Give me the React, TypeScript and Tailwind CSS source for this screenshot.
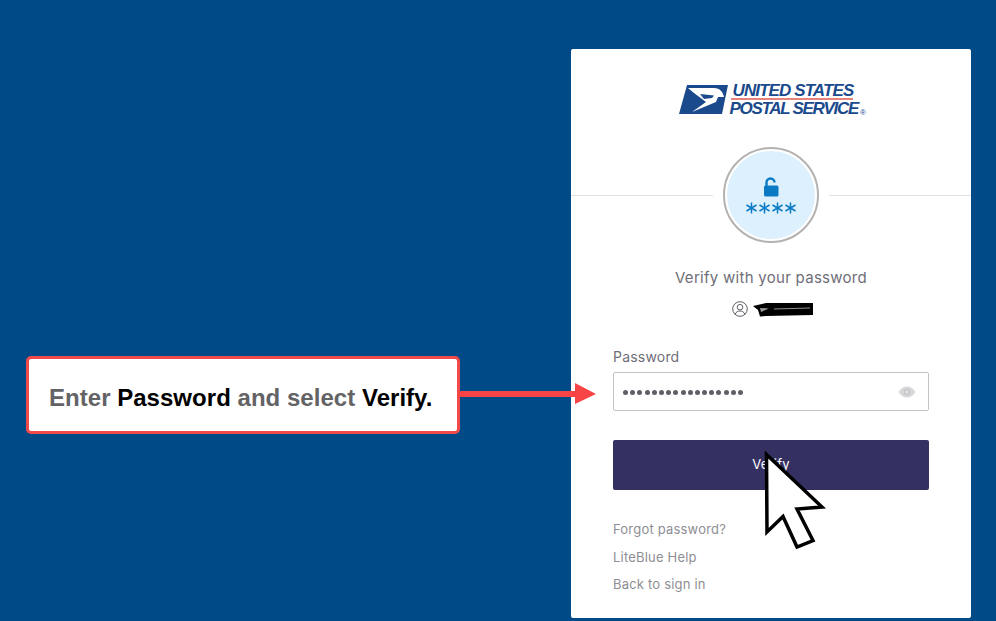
function UspsLogo() {
  return (
    <div className="flex items-start">
      <svg width="50" height="30" viewBox="0 0 50 30" className="mt-[1px] shrink-0">
        <path d="M8 0H49L43 29H0Z" fill="#1b4a8c" />
        <path d="M9 3H35C41 3 44 7 45 12L39 12L37 17L13 27L27 17L15 8Z" fill="#fff" />
        <path d="M21 9L35 10.500L33 13L25 14Z" fill="#1b4a8c" />
      </svg>
      <div className="-ml-[1px] flex w-[136px] flex-col font-['Liberation_Sans',sans-serif] text-[17px] font-bold italic leading-[14px] text-[#1b4a8c]">
        <span className="whitespace-nowrap pl-[5px] tracking-[-0.9px]">UNITED STATES</span>
        <span className="ml-[3px] mr-[11px] mb-[2px] h-[2px] bg-[#e8837c]" />
        <span className="whitespace-nowrap pl-[2px] tracking-[-1.3px]">
          POSTAL SERVICE<span className="ml-[2px] align-[-1px] text-[8px] font-normal not-italic">®</span>
        </span>
      </div>
    </div>
  );
}

function LockBadge() {
  return (
    <div className="flex h-[96px] w-[96px] items-center justify-center rounded-full border-2 border-[#b4b2b0] bg-white">
      <div className="flex h-[88px] w-[88px] flex-col items-center justify-center rounded-full bg-[#dcf0fe]">
        <svg width="16" height="20" viewBox="0 0 16 20">
          <path d="M3.500 9V5.500a4 4 0 0 1 8 0" fill="none" stroke="#0a7ac4" strokeWidth="2.400" />
          <rect x="1" y="8.500" width="14.500" height="11" rx="1.500" fill="#0a7ac4" />
        </svg>
        <svg width="52" height="12" viewBox="0 0 52 12" className="mt-[5px]" stroke="#0a7ac4" strokeWidth="1.500">
          {[6.5, 19.5, 32.5, 45.5].map((x) => (
            <g key={x}>
              <path d={`M${x} 0.500V11.500`} />
              <path d={`M${x - 5} 3L${x + 5} 9`} />
              <path d={`M${x - 5} 9L${x + 5} 3`} />
            </g>
          ))}
        </svg>
      </div>
    </div>
  );
}

function Redacted() {
  return (
    <svg width="62" height="16" viewBox="0 0 62 16" className="ml-[4px]">
      <path d="M1 5L14 2L61 2L61 14L14 15L8 15.500L6 9Z" fill="#000" />
      <path d="M8 7L17 7.500L9 11Z" fill="#fff" opacity="0.6" />
      <path d="M22 8L58 7" stroke="#fff" strokeWidth="0.8" opacity="0.7" />
    </svg>
  );
}

export default function App() {
  return (
    <div className="relative flex h-[621px] w-[996px] overflow-hidden bg-[#004b87] font-['Inter',sans-serif]">
      <div className="ml-[571px] mt-[49px] flex h-[569px] w-[400px] flex-col items-center rounded-[2px] bg-white">
        <div className="mt-[35px] h-[32px]">
          <UspsLogo />
        </div>
        <div className="mt-[31px] flex w-full items-center">
          <div className="h-[1px] flex-1 bg-[#e1e1e1]" />
          <div className="mx-[10px]">
            <LockBadge />
          </div>
          <div className="h-[1px] flex-1 bg-[#e1e1e1]" />
        </div>
        <div className="mt-[26px] text-[15px] leading-[18px] tracking-[0.28px] text-[#6e6e78]">Verify with your password</div>
        <div className="mt-[13px] flex h-[18px] items-center pl-[3px]">
          <svg width="16" height="16" viewBox="0 0 16 16" fill="none" stroke="#5f5f68" strokeWidth="1">
            <circle cx="8" cy="8" r="7.300" />
            <circle cx="8" cy="6.200" r="2.800" />
            <path d="M3.200 13.200C4 10.800 6 10 8 10s4 .8 4.800 3.200" />
          </svg>
          <Redacted />
        </div>
        <div className="mt-[30px] w-[316px]">
          <div className="text-[14px] leading-[18px] tracking-[0.2px] text-[#6e6e78]">Password</div>
          <div className="mt-[6px] flex h-[39px] items-center justify-between rounded-[2px] border border-[#c4c4c6] pl-[9px] pr-[12px]">
            <div className="mt-[2px] flex w-[120px] justify-between">
              {Array.from({ length: 17 }).map((_, i) => (
                <span key={i} className="h-[5px] w-[5px] rounded-full bg-[#5f5f68]" />
              ))}
            </div>
            <svg width="18" height="12" viewBox="0 0 18 12" className="mt-[1px]">
              <path d="M0.500 6C3 2 6 0.500 9 0.500S15 2 17.500 6C15 10 12 11.500 9 11.500S3 10 0.500 6Z" fill="#d8d8da" />
              <circle cx="9" cy="6" r="3.300" fill="#c4c4c6" />
              <circle cx="9" cy="6" r="1.800" fill="#e2e2e4" />
            </svg>
          </div>
          <button className="mt-[29px] flex h-[50px] w-full items-center justify-center rounded-[2px] bg-[#343061] text-[13px] tracking-[0.2px] text-white">
            Verify
          </button>
          <div className="mt-[30px] flex flex-col gap-[9.5px] text-[13px] leading-[18px] tracking-[0.2px] text-[#8e8e94]">
            <span>Forgot password?</span>
            <span>LiteBlue Help</span>
            <span>Back to sign in</span>
          </div>
        </div>
      </div>

      {/* annotation callout */}
      <div className="absolute left-[26px] top-[356px] flex h-[78px] w-[434px] items-center rounded-[5px] border-[3px] border-[#f04a4a] bg-white pl-[20px] pt-[6px] font-['Liberation_Sans',sans-serif] text-[24px] font-bold tracking-[0.03px] text-[#636366]">
        <span>
          Enter <span className="text-black">Password</span> and select <span className="text-black">Verify.</span>
        </span>
      </div>
      <svg className="absolute left-[458px] top-[382px]" width="140" height="24" viewBox="0 0 140 24">
        <path d="M0 9H117V1L138 12L117 22V15H0Z" fill="#f84444" />
      </svg>

      {/* mouse pointer */}
      <svg className="absolute left-[760px] top-[448px]" width="70" height="106" viewBox="0 0 70 106">
        <path d="M6.500 6.500L62 59L37 61L53 92.500L37 99L23 68.500L7 84Z" fill="#fff" stroke="#000" strokeWidth="3.500" strokeLinejoin="miter" />
      </svg>
    </div>
  );
}
